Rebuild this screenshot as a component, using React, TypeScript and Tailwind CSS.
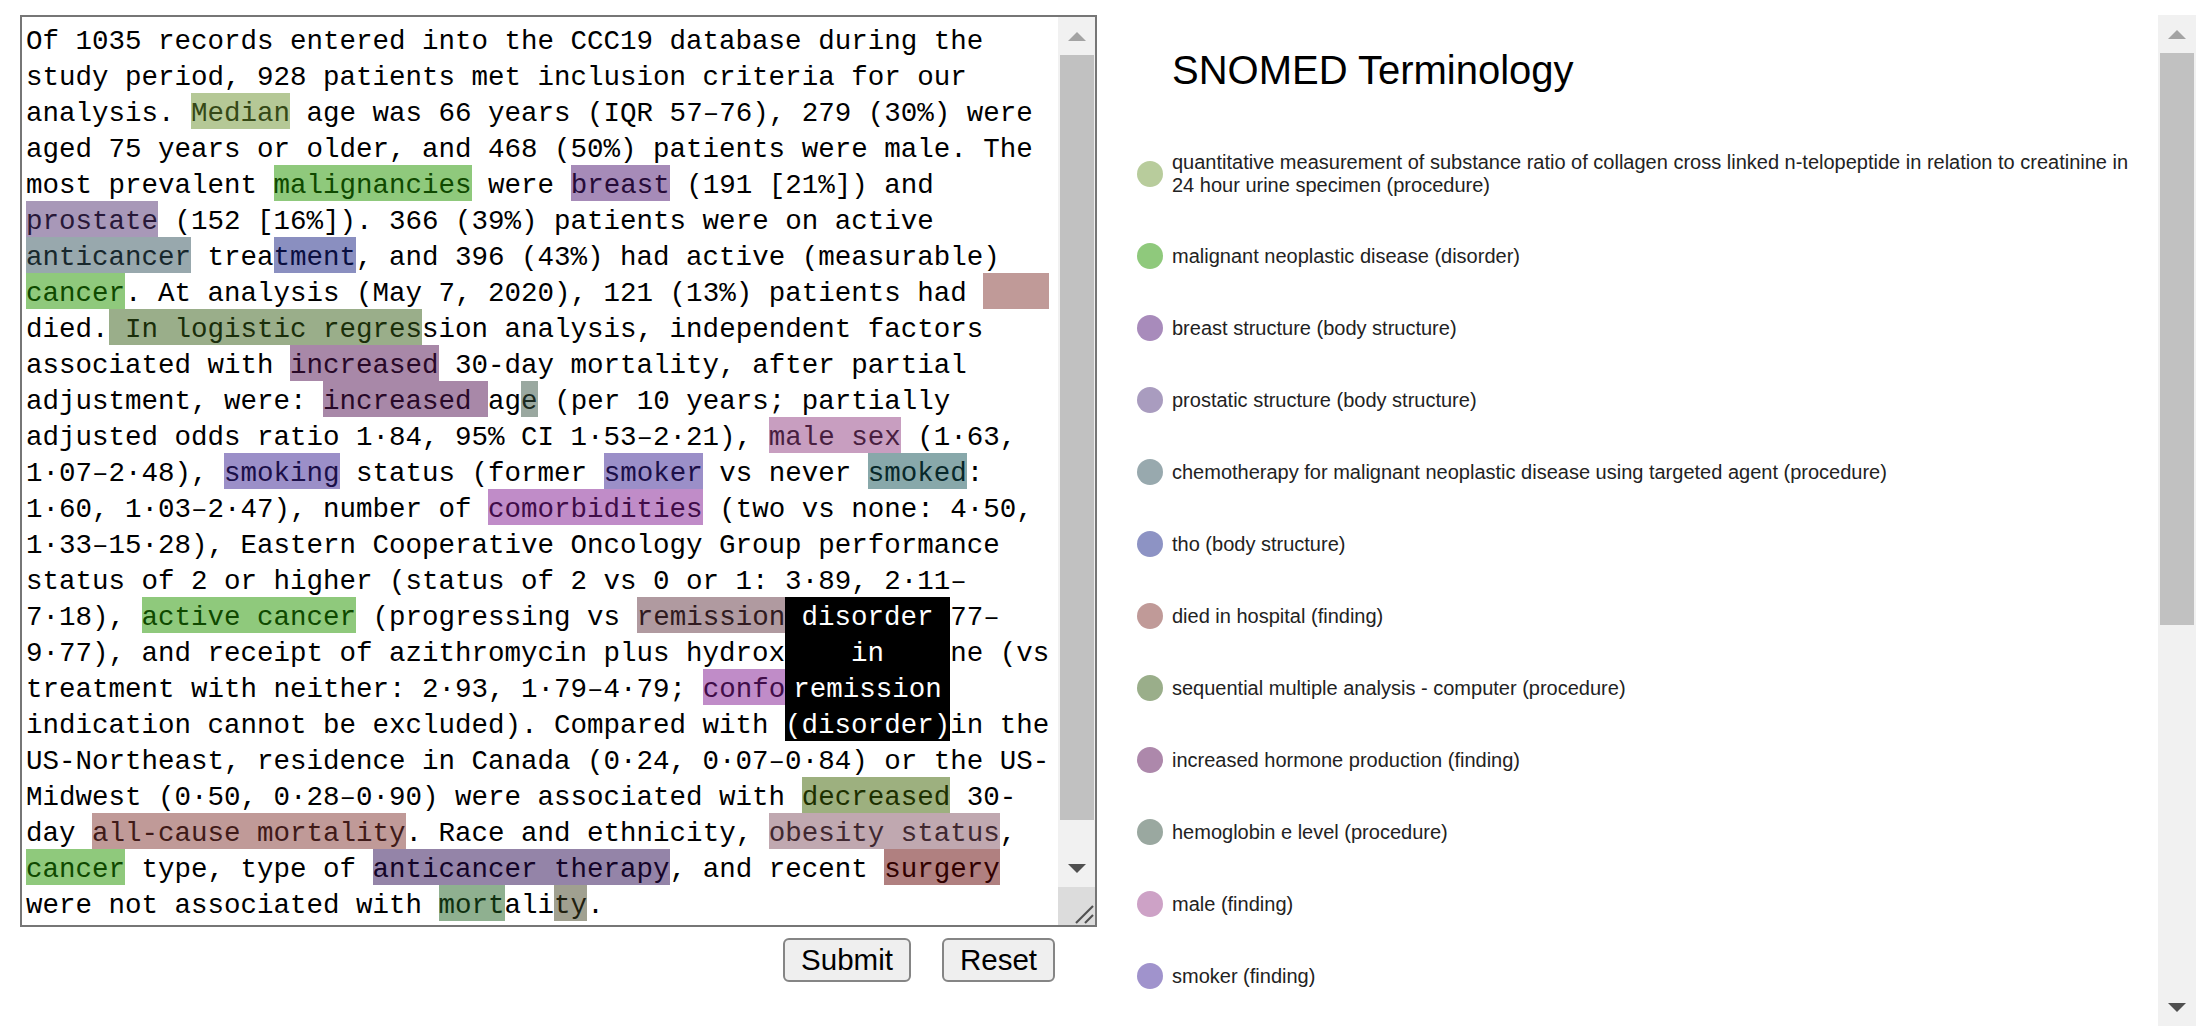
import React from "react";

type Seg = string | [string, string];

const HL: Record<string, string> = {
  olive: "bg-[#b5c896] text-[#354816]",
  green: "bg-[#8fc97c] text-[#0f4900]",
  purple: "bg-[#a68bb8] text-[#260b38]",
  lavender: "bg-[#a898b8] text-[#281838]",
  greyblue: "bg-[#98a8ad] text-[#18282d]",
  blue: "bg-[#8a8fc0] text-[#0a0f40]",
  rose: "bg-[#c09a98] text-[#401a18]",
  sage: "bg-[#9aae8a] text-[#1a2e0a]",
  mauve: "bg-[#a888a8] text-[#280828]",
  greygreen: "bg-[#9aa8a0] text-[#1a2820]",
  pink: "bg-[#c89ec0] text-[#481e40]",
  purpleblue: "bg-[#9b8fc8] text-[#1b0f48]",
  teal: "bg-[#88a8aa] text-[#08282a]",
  orchid: "bg-[#c08cc8] text-[#400c48]",
  dustyrose: "bg-[#b09aa0] text-[#301a20]",
  olive2: "bg-[#9db07f] text-[#1d3000]",
  lightmauve: "bg-[#c0a8b0] text-[#402830]",
  purplegrey: "bg-[#9484a8] text-[#140428]",
  brownred: "bg-[#b08080] text-[#300000]",
  green2: "bg-[#8fb090] text-[#0f3010]",
  khaki: "bg-[#a0a090] text-[#202010]",
};

const GAP: Seg = ["", "gap"];

const LINES: Seg[][] = [
  ["Of 1035 records entered into the CCC19 database during the"],
  ["study period, 928 patients met inclusion criteria for our"],
  ["analysis. ", ["Median", "olive"], " age was 66 years (IQR 57–76), 279 (30%) were"],
  ["aged 75 years or older, and 468 (50%) patients were male. The"],
  ["most prevalent ", ["malignancies", "green"], " were ", ["breast", "purple"], " (191 [21%]) and"],
  [["prostate", "lavender"], " (152 [16%]). 366 (39%) patients were on active"],
  [["anticancer", "greyblue"], " trea", ["tment", "blue"], ", and 396 (43%) had active (measurable)"],
  [["cancer", "green"], ". At analysis (May 7, 2020), 121 (13%) patients had ", ["    ", "rose"]],
  ["died.", [" In logistic regres", "sage"], "sion analysis, independent factors"],
  ["associated with ", ["increased", "mauve"], " 30-day mortality, after partial"],
  ["adjustment, were: ", ["increased ", "mauve"], "ag", ["e", "greygreen"], " (per 10 years; partially"],
  ["adjusted odds ratio 1·84, 95% CI 1·53–2·21), ", ["male sex", "pink"], " (1·63,"],
  ["1·07–2·48), ", ["smoking", "purpleblue"], " status (former ", ["smoker", "purpleblue"], " vs never ", ["smoked", "teal"], ":"],
  ["1·60, 1·03–2·47), number of ", ["comorbidities", "orchid"], " (two vs none: 4·50,"],
  ["1·33–15·28), Eastern Cooperative Oncology Group performance"],
  ["status of 2 or higher (status of 2 vs 0 or 1: 3·89, 2·11–"],
  ["7·18), ", ["active cancer", "green"], " (progressing vs ", ["remission", "dustyrose"], GAP, "77–"],
  ["9·77), and receipt of azithromycin plus hydrox", GAP, "ne (vs"],
  ["treatment with neither: 2·93, 1·79–4·79; ", ["confo", "orchid"], GAP],
  ["indication cannot be excluded). Compared with ", GAP, "in the"],
  ["US-Northeast, residence in Canada (0·24, 0·07–0·84) or the US-"],
  ["Midwest (0·50, 0·28–0·90) were associated with ", ["decreased", "olive2"], " 30-"],
  ["day ", ["all-cause mortality", "rose"], ". Race and ethnicity, ", ["obesity status", "lightmauve"], ","],
  [["cancer", "green"], " type, type of ", ["anticancer therapy", "purplegrey"], ", and recent ", ["surgery", "brownred"]],
  ["were not associated with ", ["mort", "green2"], "ali", ["ty", "khaki"], "."],
];

const TERMS: [string, string][] = [
  ["bg-[#b8cc9c]", "quantitative measurement of substance ratio of collagen cross linked n-telopeptide in relation to creatinine in 24 hour urine specimen (procedure)"],
  ["bg-[#8fc97c]", "malignant neoplastic disease (disorder)"],
  ["bg-[#a88bbb]", "breast structure (body structure)"],
  ["bg-[#a99cbf]", "prostatic structure (body structure)"],
  ["bg-[#98a9ae]", "chemotherapy for malignant neoplastic disease using targeted agent (procedure)"],
  ["bg-[#8d93c4]", "tho (body structure)"],
  ["bg-[#c09a98]", "died in hospital (finding)"],
  ["bg-[#9aae8a]", "sequential multiple analysis - computer (procedure)"],
  ["bg-[#ad88ab]", "increased hormone production (finding)"],
  ["bg-[#9aa8a0]", "hemoglobin e level (procedure)"],
  ["bg-[#cda2c6]", "male (finding)"],
  ["bg-[#a093cc]", "smoker (finding)"],
];

function UpArrow({ dark }: { dark?: boolean }) {
  return (
    <svg width="18" height="9" viewBox="0 0 18 9">
      <polygon points="9,0 18,9 0,9" fill={dark ? "#505050" : "#a3a3a3"} />
    </svg>
  );
}

function DownArrow({ dark }: { dark?: boolean }) {
  return (
    <svg width="18" height="9" viewBox="0 0 18 9">
      <polygon points="0,0 18,0 9,9" fill={dark ? "#505050" : "#a3a3a3"} />
    </svg>
  );
}

function Line({ segs }: { segs: Seg[] }) {
  return (
    <div className="h-[36px] leading-[42px] whitespace-pre">
      {segs.map((s, i) => {
        if (typeof s === "string") return <span key={i}>{s}</span>;
        if (s[1] === "gap")
          return <span key={i} className="inline-block w-[10ch] h-[36px] align-top" />;
        return (
          <span key={i} className={"inline-block h-[36px] leading-[42px] align-top " + HL[s[1]]}>
            {s[0]}
          </span>
        );
      })}
    </div>
  );
}

export default function App() {
  return (
    <div className="min-h-screen bg-white flex items-start">
      {/* Left column */}
      <div className="ml-[20px] mt-[15px] w-[1077px] flex flex-col">
        <div className="h-[912px] border-2 border-[#767676] flex bg-white">
          <div className="flex-1 relative overflow-hidden pl-[4px] pt-[4px] font-['Liberation_Mono',monospace] text-[27.5px] text-black">
            <div className="relative">
              {LINES.map((l, i) => (
                <Line key={i} segs={l} />
              ))}
              <div className="absolute left-[46ch] top-[576px] w-[10ch] h-[144px] bg-black text-white text-center whitespace-pre">
                <div className="h-[36px] leading-[42px]">disorder</div>
                <div className="h-[36px] leading-[42px]">in</div>
                <div className="h-[36px] leading-[42px]">remission</div>
                <div className="h-[36px] leading-[42px]">(disorder)</div>
              </div>
            </div>
          </div>
          <div className="w-[37px] bg-[#f1f1f1] flex flex-col">
            <div className="h-[38px] flex items-center justify-center">
              <UpArrow />
            </div>
            <div className="h-[765px] ml-[2px] mr-[1px] bg-[#c1c1c1]" />
            <div className="flex-1" />
            <div className="h-[38px] flex items-center justify-center">
              <DownArrow dark />
            </div>
            <div className="h-[38px] bg-[#dcdcdc]">
              <svg width="37" height="38" viewBox="0 0 37 38">
                <line x1="18" y1="36" x2="35" y2="19" stroke="#505050" strokeWidth="2.2" />
                <line x1="27" y1="36" x2="35" y2="28" stroke="#505050" strokeWidth="2.2" />
              </svg>
            </div>
          </div>
        </div>
        <div className="mt-[11px] flex justify-end gap-[31px] pr-[42px] font-['Liberation_Sans',Arial,sans-serif] text-[29.5px] text-black">
          <button className="h-[44px] w-[128px] border-2 border-[#858585] rounded-[6px] bg-[#efefef] leading-none">
            Submit
          </button>
          <button className="h-[44px] w-[113px] border-2 border-[#858585] rounded-[6px] bg-[#efefef] leading-none">
            Reset
          </button>
        </div>
      </div>

      {/* Right panel */}
      <div className="ml-[20px] mt-[15px] w-[1079px] h-[1011px] flex overflow-hidden font-['Liberation_Sans',Arial,sans-serif]">
        <div className="flex-1 overflow-hidden pl-[20px] pr-[18px] pt-[32px]">
          <h2 className="pl-[35px] text-[40px] leading-[46px] font-normal text-black">SNOMED Terminology</h2>
          <div className="mt-[58px] flex flex-col gap-[46px]">
            {TERMS.map(([c, t], i) => (
              <div key={i} className="flex items-center gap-[9px]">
                <div className={"w-[26px] h-[26px] rounded-full shrink-0 " + c} />
                <div className="text-[20px] leading-[23px] text-[#222]">{t}</div>
              </div>
            ))}
          </div>
        </div>
        <div className="w-[38px] h-full bg-[#f1f1f1] flex flex-col">
          <div className="h-[38px] flex items-center justify-center">
            <UpArrow />
          </div>
          <div className="h-[572px] mx-[2px] bg-[#c1c1c1]" />
          <div className="flex-1" />
          <div className="h-[38px] flex items-center justify-center">
            <DownArrow dark />
          </div>
        </div>
      </div>
    </div>
  );
}
